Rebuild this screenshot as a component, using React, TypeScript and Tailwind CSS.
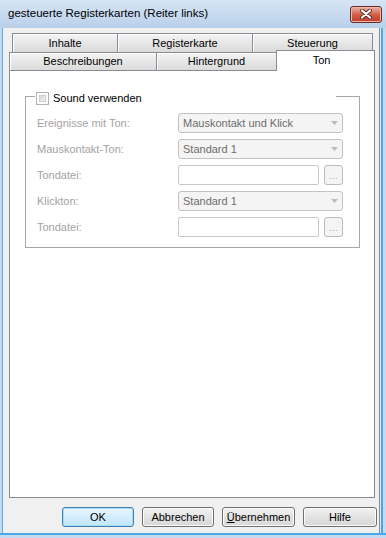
import React from "react";

const tabCls =
  "flex items-center justify-center border-t border-l border-[#898c95] bg-linear-to-b from-[#f4f4f4] to-[#dadada] shadow-[inset_1px_1px_0_#ffffff] text-[11px] text-black leading-none";

function Arrow() {
  return (
    <svg width="7" height="4" viewBox="0 0 7 4" className="ml-auto mr-[4px]">
      <path d="M0 0 L7 0 L3.5 4 Z" fill="#bcbcbc" />
    </svg>
  );
}

function Combo({ text }: { text: string }) {
  return (
    <div className="w-[165px] h-[20px] rounded-[3px] border border-[#c3c3c3] bg-[#f4f4f4] flex items-center pl-[4px] text-[11px] text-[#6d6d6d]">
      <span>{text}</span>
      <Arrow />
    </div>
  );
}

function FileField() {
  return (
    <div className="flex items-center">
      <div className="w-[141px] h-[20px] rounded-[2px] border border-[#c8c8c8] bg-white" />
      <div className="ml-[5px] w-[19px] h-[20px] rounded-[3px] border border-[#bcbcbc] bg-[#f4f4f4] flex items-end justify-center pb-[3px]">
        <span className="text-[9px] leading-none text-[#a8a8a8] tracking-[0.5px]">...</span>
      </div>
    </div>
  );
}

function Row({ label, children }: { label: string; children: React.ReactNode }) {
  return (
    <div className="flex items-center h-[20px]">
      <div className="w-[141px] text-[11px] text-[#a3a3a3]">{label}</div>
      {children}
    </div>
  );
}

function Btn({ w, children, def }: { w: string; children: React.ReactNode; def?: boolean }) {
  return (
    <div
      className={
        "h-[20px] rounded-[3px] border flex items-center justify-center text-[11px] text-black " +
        w +
        " " +
        (def
          ? "border-[#3c7fb1] bg-linear-to-b from-[#eaf6fd] to-[#bee6fd] shadow-[inset_0_0_0_1px_#a8def7]"
          : "border-[#707070] bg-linear-to-b from-[#f2f2f2] to-[#d6d6d6] shadow-[inset_0_0_0_1px_#fcfcfc]")
      }
    >
      {children}
    </div>
  );
}

export default function App() {
  return (
    <div className="w-[386px] h-[538px] flex flex-col bg-[#c5d9ef] overflow-hidden font-['Liberation_Sans',Arial,sans-serif] text-black">
      {/* Title bar */}
      <div className="h-[28px] shrink-0 flex items-center pl-[8px] pr-[4px] bg-linear-to-b from-[#d6e5f5] to-[#b9d0ea]">
        <span className="text-[11.5px] text-black">gesteuerte Registerkarten (Reiter links)</span>
        <div className="ml-auto w-[32px] h-[17px] rounded-[3px] border border-[#6b2a22] bg-linear-to-b from-[#e9b2a4] via-[#d2614b] to-[#c0392a] shadow-[inset_0_0_0_1px_#f0b8aa] flex items-center justify-center">
          <svg width="12" height="10" viewBox="0 0 12 10">
            <path d="M2 1.5 L10 8.5 M10 1.5 L2 8.5" stroke="#5b2b26" strokeWidth="4" strokeLinecap="round" />
            <path d="M2 1.5 L10 8.5 M10 1.5 L2 8.5" stroke="#ffffff" strokeWidth="2.2" strokeLinecap="round" />
          </svg>
        </div>
      </div>

      {/* Middle */}
      <div className="flex-1 flex min-h-0">
        <div className="w-[2px] bg-[#c5d9ef]" />
        <div className="w-[1px] bg-[#5aaee6]" />
        <div className="flex-1 flex flex-col bg-[#f0f0f0] border-r border-[#8c8c8c] pt-[5px] pr-[4px] pb-[6px] pl-[6px]">
          {/* Tab row 1 */}
          <div className="ml-[3px] flex h-[19px] shrink-0">
            <div className={tabCls + " w-[105px]"}>Inhalte</div>
            <div className={tabCls + " w-[135px]"}>Registerkarte</div>
            <div className={tabCls + " w-[121px] border-r"}>Steuerung</div>
          </div>
          {/* Tab row 2 */}
          <div className="flex h-[18px] shrink-0 items-start">
            <div className={tabCls + " w-[147px] h-[18px]"}>Beschreibungen</div>
            <div className={tabCls + " w-[120px] h-[18px]"}>Hintergrund</div>
            <div className="relative z-10 -mt-[2px] w-[99px] h-[21px] border-t border-l border-r border-[#898c95] bg-white flex items-center justify-center pr-[8px] pb-[1px] text-[11px] leading-none text-black">
              Ton
            </div>
          </div>
          {/* Panel */}
          <div className="flex-1 border border-[#898c95] bg-white pt-[25px] pl-[15px]">
            <div className="relative w-[335px] h-[152px] border border-[#a7a7a7] pt-[16px] pl-[11px] flex flex-col gap-[6px]">
              <div className="absolute left-[9px] top-[-6px] h-[15px] w-[301px] bg-white flex items-center pl-[1px]">
                <div className="w-[13px] h-[13px] border border-[#b1b1b1] bg-white p-[2px]">
                  <div className="w-full h-full bg-linear-to-br from-[#d4d4d4] to-[#f4f4f4] border border-[#cfcfcf]" />
                </div>
                <span className="ml-[4px] text-[11px] text-black">Sound verwenden</span>
              </div>
              <Row label="Ereignisse mit Ton:">
                <Combo text="Mauskontakt und Klick" />
              </Row>
              <Row label="Mauskontakt-Ton:">
                <Combo text="Standard 1" />
              </Row>
              <Row label="Tondatei:">
                <FileField />
              </Row>
              <Row label="Klickton:">
                <Combo text="Standard 1" />
              </Row>
              <Row label="Tondatei:">
                <FileField />
              </Row>
            </div>
          </div>
          {/* Buttons */}
          <div className="mt-[9px] mr-[-2px] flex justify-end gap-[8px] shrink-0">
            <Btn w="w-[72px]" def>
              OK
            </Btn>
            <Btn w="w-[72px]">Abbrechen</Btn>
            <Btn w="w-[73px]">
              <span>
                <span className="underline">Ü</span>bernehmen
              </span>
            </Btn>
            <Btn w="w-[74px]">Hilfe</Btn>
          </div>
        </div>
        <div className="w-[1px] bg-[#dce8f4]" />
        <div className="w-[2px] bg-[#4aa8e4]" />
        <div className="w-[3px] bg-[#c5d9ef]" />
      </div>
      <div className="h-[5px] shrink-0 flex flex-col">
        <div className="h-[2px] bg-[#4aa8e4]" />
        <div className="flex-1 bg-[#c5d9ef]" />
      </div>
    </div>
  );
}
